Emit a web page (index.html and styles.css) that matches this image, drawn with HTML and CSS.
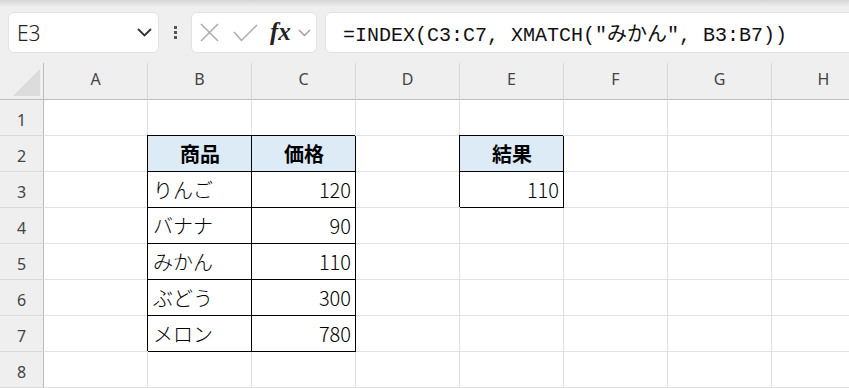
FILE: index.html
```html
<!DOCTYPE html>
<html lang="ja">
<head>
    <meta charset="UTF-8">
    <title>INDEX / XMATCH</title>
    <link rel="stylesheet" href="styles.css">
</head>
<body>
    <div class="toolbar">
        <div class="name-box">
            <span>E3</span>
            <svg width="15" height="9" viewBox="0 0 15 9"><polyline points="1,1 7.5,7.5 14,1" fill="none" stroke="#333" stroke-width="1.8"/></svg>
        </div>
        <div class="grip"><i></i><i></i><i></i></div>
        <div class="fx-box">
            <svg class="ico-x" width="19" height="19" viewBox="0 0 19 19"><path d="M1 1L18 18M18 1L1 18" stroke="#ababab" stroke-width="1.5"/></svg>
            <svg class="ico-ok" width="25" height="18" viewBox="0 0 25 18"><polyline points="1,8 8.5,16.5 24,1" fill="none" stroke="#ababab" stroke-width="1.5"/></svg>
            <span class="fx">fx</span>
            <svg class="ico-more" width="13" height="8" viewBox="0 0 13 8"><polyline points="1,1 6.5,6.5 12,1" fill="none" stroke="#9a9a9a" stroke-width="1.4"/></svg>
        </div>
        <div class="formula">=INDEX(C3:C7, XMATCH("みかん", B3:B7))</div>
    </div>

    <div class="sheet">
        <div class="corner"></div>
        <div class="col-h">A</div>
        <div class="col-h">B</div>
        <div class="col-h">C</div>
        <div class="col-h">D</div>
        <div class="col-h">E</div>
        <div class="col-h">F</div>
        <div class="col-h">G</div>
        <div class="col-h">H</div>

        <div class="row-h">1</div>
        <div class="c"></div><div class="c"></div><div class="c"></div><div class="c"></div>
        <div class="c"></div><div class="c"></div><div class="c"></div><div class="c"></div>

        <div class="row-h">2</div>
        <div class="c"></div>
        <div class="c box hd">商品</div>
        <div class="c box hd">価格</div>
        <div class="c"></div>
        <div class="c box hd">結果</div>
        <div class="c"></div><div class="c"></div><div class="c"></div>

        <div class="row-h">3</div>
        <div class="c"></div>
        <div class="c box">りんご</div>
        <div class="c box num">120</div>
        <div class="c"></div>
        <div class="c box num">110</div>
        <div class="c"></div><div class="c"></div><div class="c"></div>

        <div class="row-h">4</div>
        <div class="c"></div>
        <div class="c box">バナナ</div>
        <div class="c box num">90</div>
        <div class="c"></div><div class="c"></div><div class="c"></div><div class="c"></div><div class="c"></div>

        <div class="row-h">5</div>
        <div class="c"></div>
        <div class="c box">みかん</div>
        <div class="c box num">110</div>
        <div class="c"></div><div class="c"></div><div class="c"></div><div class="c"></div><div class="c"></div>

        <div class="row-h">6</div>
        <div class="c"></div>
        <div class="c box">ぶどう</div>
        <div class="c box num">300</div>
        <div class="c"></div><div class="c"></div><div class="c"></div><div class="c"></div><div class="c"></div>

        <div class="row-h">7</div>
        <div class="c"></div>
        <div class="c box">メロン</div>
        <div class="c box num">780</div>
        <div class="c"></div><div class="c"></div><div class="c"></div><div class="c"></div><div class="c"></div>

        <div class="row-h">8</div>
        <div class="c"></div><div class="c"></div><div class="c"></div><div class="c"></div>
        <div class="c"></div><div class="c"></div><div class="c"></div><div class="c"></div>
    </div>
</body>
</html>
```

FILE: styles.css
```css
* {
    margin: 0;
    padding: 0;
    box-sizing: border-box;
}

body {
    width: 849px;
    height: 388px;
    overflow: hidden;
    background: #fff;
    font-family: 'Noto Sans', sans-serif;
}

/* formula bar */

.toolbar {
    height: 63px;
    display: flex;
    align-items: flex-start;
    padding: 12px 0 0 8px;
    background: linear-gradient(#d6d6d6, #efefef 7px);
}

.name-box {
    width: 151px;
    height: 41px;
    flex-shrink: 0;
    background: #fff;
    border: 1px solid #e2e2e2;
    border-radius: 6px;
    display: flex;
    align-items: center;
    justify-content: space-between;
    padding: 0 6px 0 8px;
    font-size: 21px;
    font-weight: 300;
    color: #222;
}

.grip {
    width: 32px;
    height: 41px;
    flex-shrink: 0;
    display: flex;
    flex-direction: column;
    align-items: center;
    justify-content: center;
    gap: 2px;
}

.grip i {
    width: 3px;
    height: 3px;
    background: #555;
}

.fx-box {
    width: 126px;
    height: 41px;
    flex-shrink: 0;
    background: #fff;
    border: 1px solid #e2e2e2;
    border-radius: 6px;
    display: flex;
    align-items: center;
    padding-left: 8px;
}

.ico-ok {
    margin-left: 14px;
}

.fx {
    margin-left: 12px;
    font-family: 'Liberation Serif', serif;
    font-style: italic;
    font-weight: bold;
    font-size: 25px;
    color: #222;
    line-height: 1;
    padding-bottom: 3px;
}

.ico-more {
    margin-left: 7px;
}

.formula {
    flex: 1;
    height: 41px;
    margin: 0 -20px 0 8px;
    background: #fff;
    border: 1px solid #e2e2e2;
    border-radius: 6px;
    display: flex;
    align-items: center;
    padding-left: 17px;
    font-family: 'Liberation Mono', 'Noto Sans CJK JP', monospace;
    font-size: 20px;
    color: #111;
    white-space: nowrap;
}

/* grid */

.sheet {
    display: grid;
    grid-template-columns: 44px repeat(8, 104px);
    grid-template-rows: 37px repeat(8, 36px);
}

.corner {
    position: relative;
    background: #efefef;
    border-right: 1px solid #bcbcbc;
    border-bottom: 1px solid #bcbcbc;
}

.corner::after {
    content: '';
    position: absolute;
    right: 3px;
    bottom: 3px;
    width: 27px;
    height: 27px;
    background: #dcdcdc;
    clip-path: polygon(100% 0, 100% 100%, 0 100%);
}

.col-h {
    background: #efefef;
    border-right: 1px solid #d9d9d9;
    border-bottom: 1px solid #bcbcbc;
    display: flex;
    align-items: center;
    justify-content: center;
    padding-bottom: 5px;
    font-size: 16px;
    color: #444;
}

.row-h {
    background: #efefef;
    border-right: 1px solid #bcbcbc;
    border-bottom: 1px solid #dadada;
    display: flex;
    align-items: center;
    justify-content: center;
    padding-top: 4px;
    font-size: 16px;
    color: #444;
}

.c {
    border-right: 1px solid #e1e1e1;
    border-bottom: 1px solid #e1e1e1;
    display: flex;
    align-items: center;
    padding: 0 4px 0 5px;
    font-family: 'Noto Sans CJK JP', sans-serif;
    font-size: 20px;
    font-weight: 300;
    color: #000;
    white-space: nowrap;
}

.box {
    border-color: #000;
    box-shadow: -1px -1px 0 #000;
}

.hd {
    background: #ddebf7;
    justify-content: center;
    font-weight: bold;
}

.num {
    justify-content: flex-end;
}
```
